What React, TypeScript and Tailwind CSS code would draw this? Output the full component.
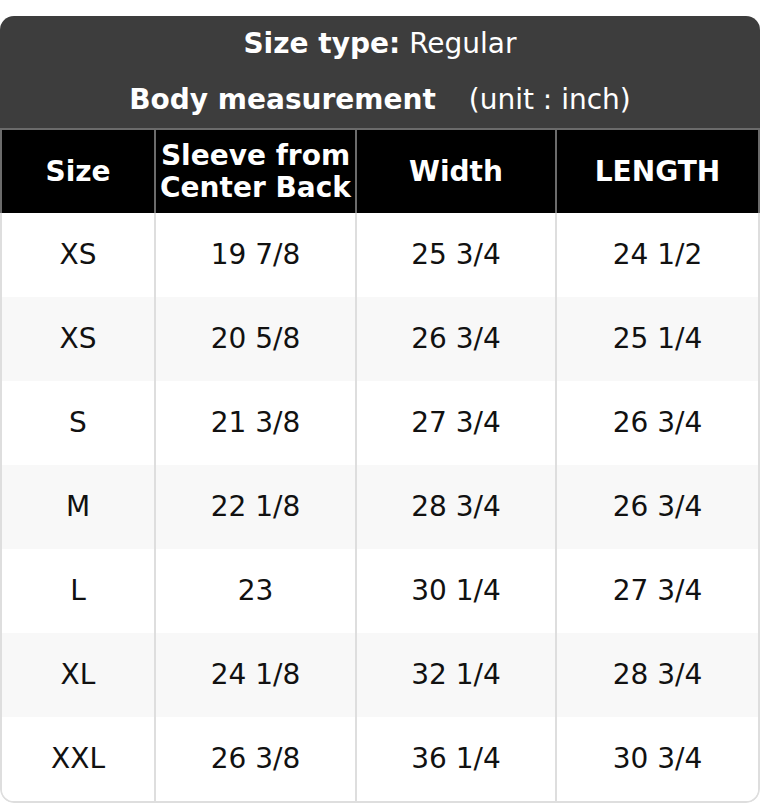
const rows = [
  ["XS", "19 7/8", "25 3/4", "24 1/2"],
  ["XS", "20 5/8", "26 3/4", "25 1/4"],
  ["S", "21 3/8", "27 3/4", "26 3/4"],
  ["M", "22 1/8", "28 3/4", "26 3/4"],
  ["L", "23", "30 1/4", "27 3/4"],
  ["XL", "24 1/8", "32 1/4", "28 3/4"],
  ["XXL", "26 3/8", "36 1/4", "30 3/4"],
];

const widths = ["w-[154px]", "w-[201px]", "w-[200px]", "w-[201px]"];

export default function App() {
  return (
    <div className="min-h-screen bg-white pt-4 font-['DejaVu_Sans',sans-serif] text-[28px] leading-[32px]">
      <div className="w-[760px] overflow-hidden rounded-[14px]">
        <div className="bg-[#3d3d3d] text-white">
          <div className="flex h-[56px] items-center justify-center">
            <span className="font-bold">Size type:</span>
            <span className="ml-[9px]">Regular</span>
          </div>
          <div className="flex h-[56px] items-center justify-center">
            <span className="font-bold">Body measurement</span>
            <span className="ml-[33px]">(unit : inch)</span>
          </div>
        </div>
        <div className="flex h-[85px] border-x-2 border-t-2 border-[#6b6b6b] bg-black font-bold text-white">
          {["Size", "Sleeve from\nCenter Back", "Width", "LENGTH"].map((h, i) => (
            <div
              key={h}
              className={`${widths[i]} flex items-center justify-center whitespace-pre-line text-center ${i < 3 ? "border-r-2 border-[#6b6b6b]" : ""}`}
            >
              {h}
            </div>
          ))}
        </div>
        <div className="overflow-hidden rounded-b-[14px] border-x-2 border-b-2 border-[#dedede] text-[#111]">
          {rows.map((r, ri) => (
            <div key={ri} className={`flex h-[84px] ${ri % 2 === 1 ? "bg-[#f8f8f8]" : "bg-white"}`}>
              {r.map((c, i) => (
                <div
                  key={i}
                  className={`${widths[i]} flex items-center justify-center ${i < 3 ? "border-r-2 border-[#dedede]" : ""}`}
                >
                  {c}
                </div>
              ))}
            </div>
          ))}
        </div>
      </div>
    </div>
  );
}
